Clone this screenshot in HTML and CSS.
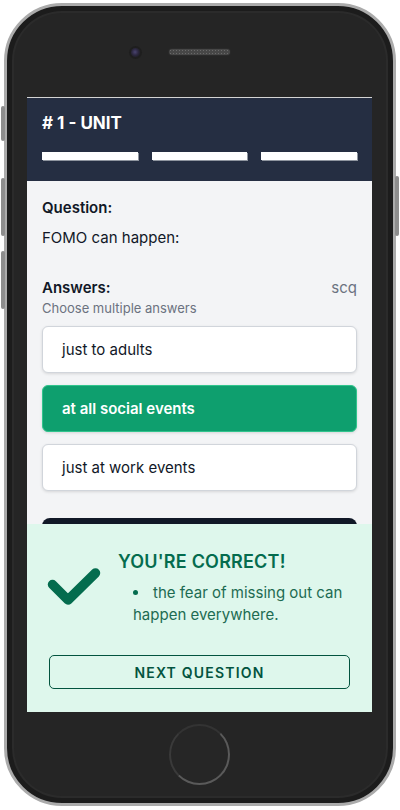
FILE: index.html
```html
<!DOCTYPE html>
<html lang="en">
<head>
<meta charset="utf-8">
<title>Quiz</title>
<link rel="stylesheet" href="styles.css">
</head>
<body>
<div class="phone">
  <span class="side-btn side-l1"></span>
  <span class="side-btn side-l2"></span>
  <span class="side-btn side-l3"></span>
  <span class="side-btn side-r1"></span>
  <div class="phone-top">
    <span class="camera"></span>
    <span class="speaker"></span>
  </div>
  <div class="screen">
    <header class="unit-header">
      <h1 class="unit-title"># 1 - UNIT</h1>
      <div class="progress">
        <span class="progress-bar"></span>
        <span class="progress-bar"></span>
        <span class="progress-bar"></span>
      </div>
    </header>
    <main class="quiz">
      <h2 class="label">Question:</h2>
      <p class="question">FOMO can happen:</p>
      <div class="answers-head">
        <h2 class="label">Answers:</h2>
        <span class="type">scq</span>
      </div>
      <p class="hint">Choose multiple answers</p>
      <ul class="options">
        <li class="option">just to adults</li>
        <li class="option option-correct">at all social events</li>
        <li class="option">just at work events</li>
      </ul>
      <div class="submit"></div>
    </main>
    <section class="feedback">
      <div class="feedback-row">
        <svg class="check" width="54" height="40" viewBox="0 0 54 40">
          <polyline points="5.5,18.5 21,34 48.5,7" fill="none" stroke="#046c4e" stroke-width="9.5" stroke-linecap="round" stroke-linejoin="round"/>
        </svg>
        <div class="feedback-text">
          <h3 class="feedback-title">YOU'RE CORRECT!</h3>
          <ul class="feedback-list">
            <li>the fear of missing out can happen everywhere.</li>
          </ul>
        </div>
      </div>
      <button class="next-btn">NEXT QUESTION</button>
    </section>
  </div>
  <div class="phone-bottom">
    <span class="home"></span>
  </div>
</div>
</body>
</html>
```
FILE: styles.css
```css
* { box-sizing: border-box; }
html, body { margin: 0; padding: 0; background: #ffffff; }
body {
  font-family: Inter, "Noto Sans", sans-serif;
  width: 400px;
  height: 810px;
  overflow: hidden;
}
.phone {
  position: relative;
  margin: 3px 0 0 4px;
  width: 392px;
  height: 803px;
  border: 3px solid #ababab;
  border-radius: 58px;
  background: #252525;
  box-shadow: inset 0 0 0 5px #1c1c1c, inset 0 0 0 7px #2b2b2b;
  display: flex;
  flex-direction: column;
  padding: 0 21px 0 20px;
}
.side-btn {
  position: absolute;
  width: 4px;
  background: #8d8d8d;
  border-radius: 2px;
}
.side-l1 { left: -6px; top: 100px; height: 35px; }
.side-l2 { left: -6px; top: 172px; height: 58px; }
.side-l3 { left: -6px; top: 245px; height: 58px; }
.side-r1 { right: -6px; top: 170px; height: 60px; }

.phone-top {
  height: 91px;
  flex: none;
  display: grid;
  grid-template-columns: 1fr auto 1fr;
  align-items: center;
  padding-top: 1px;
}
.camera {
  justify-self: end;
  margin-right: 29px;
  width: 9px;
  height: 9px;
  border-radius: 50%;
  background: radial-gradient(circle at 45% 45%, #4a4470 0, #2c2840 45%, #161616 100%);
  box-shadow: 0 0 0 2px #1e1e1e;
}
.speaker {
  width: 61px;
  height: 6px;
  border-radius: 3px;
  background: #474747;
  background-image: radial-gradient(circle, #6a6a6a 0.8px, transparent 1px);
  background-size: 3px 3px;
  box-shadow: 0 0 0 1px #2a2a2a;
}

.screen {
  position: relative;
  width: 345px;
  height: 615px;
  flex: none;
  overflow: hidden;
  background: #f3f4f6;
  border-top: 1px solid #d4d4d4;
}
.unit-header {
  background: #252e42;
  padding: 13px 15px 21px 15px;
}
.unit-title {
  margin: 0;
  color: #ffffff;
  font-size: 17px;
  font-weight: 700;
  line-height: 24px;
}
.progress {
  display: flex;
  gap: 14px;
  margin-top: 17px;
}
.progress-bar {
  flex: 1;
  height: 8px;
  background: #ffffff;
  box-shadow: 1px 1px 0 #8f959f;
}

.quiz {
  padding: 17px 15px 0 15px;
}
.label {
  margin: 0;
  font-size: 15px;
  font-weight: 600;
  line-height: 20px;
  color: #111827;
}
.question {
  margin: 9px 0 0 0;
  font-size: 15px;
  line-height: 22px;
  color: #111827;
}
.answers-head {
  margin-top: 29px;
  display: flex;
  justify-content: space-between;
  align-items: baseline;
}
.type {
  font-size: 15px;
  color: #6b7280;
}
.hint {
  margin: 1px 0 0 0;
  font-size: 13px;
  line-height: 18px;
  color: #6b7280;
}
.options {
  list-style: none;
  margin: 9px 0 0 0;
  padding: 0;
  display: flex;
  flex-direction: column;
  gap: 12px;
}
.option {
  height: 47px;
  display: flex;
  align-items: center;
  padding-left: 19px;
  background: #ffffff;
  border: 1px solid #d1d5db;
  border-radius: 6px;
  box-shadow: 0 1px 3px rgba(0,0,0,0.12);
  font-size: 15px;
  color: #111827;
}
.option-correct {
  background: #0e9f6e;
  border-color: #31c48d;
  color: #ffffff;
  font-weight: 600;
}
.submit {
  margin-top: 27px;
  height: 46px;
  background: #111827;
  border-radius: 8px;
}

.feedback {
  position: absolute;
  left: 0;
  right: 0;
  bottom: 0;
  height: 188px;
  background: #def7ec;
  padding: 26px 22px 0 22px;
  display: flex;
  flex-direction: column;
}
.feedback-row {
  display: flex;
  align-items: flex-start;
  gap: 17px;
}
.check {
  flex: none;
  margin-top: 16px;
  margin-left: -2px;
}
.feedback-title {
  margin: 0;
  font-size: 18px;
  font-weight: 600;
  line-height: 24px;
  color: #046c4e;
  letter-spacing: 0.2px;
}
.feedback-list {
  margin: 8px 0 0 0;
  padding-left: 15px;
  list-style: none;
  font-size: 15px;
  line-height: 22px;
  color: #1d6b52;
}
.feedback-list li::before {
  content: "";
  display: inline-block;
  width: 5px;
  height: 5px;
  border-radius: 50%;
  background: #046c4e;
  vertical-align: middle;
  margin: -2px 15px 0 0;
}
.next-btn {
  margin-top: auto;
  margin-bottom: 23px;
  width: 301px;
  height: 34px;
  background: transparent;
  border: 1px solid #03543f;
  border-radius: 5px;
  font-family: Inter, "Noto Sans", sans-serif;
  font-size: 14px;
  font-weight: 600;
  letter-spacing: 1.2px;
  color: #03543f;
  padding: 0;
}

.phone-bottom {
  flex: 1;
  display: flex;
  align-items: center;
  justify-content: center;
  padding-bottom: 6px;
}
.home {
  width: 61px;
  height: 61px;
  border-radius: 50%;
  border: 2px solid #5a5a5a;
  border-top-color: #333;
  border-left-color: #3a3a3a;
  background: #262626;
}
```
